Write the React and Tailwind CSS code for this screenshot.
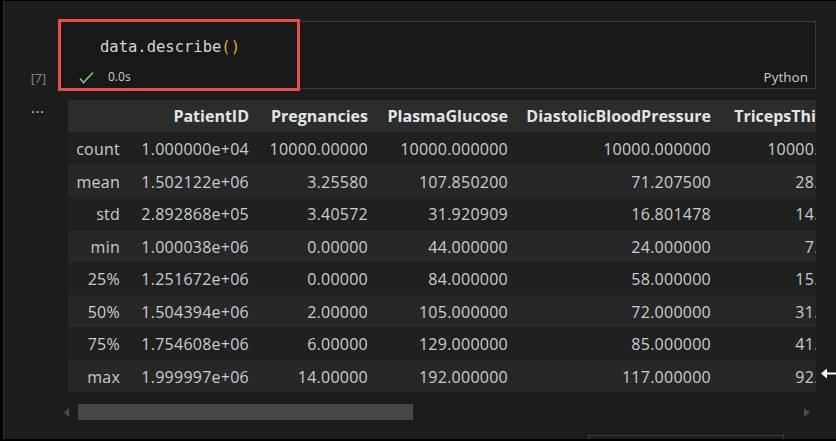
import React from "react";

const headers = ["", "PatientID", "Pregnancies", "PlasmaGlucose", "DiastolicBloodPressure", "TricepsThickness"];
const rows = [
  ["count", "1.000000e+04", "10000.00000", "10000.000000", "10000.000000", "10000.000000"],
  ["mean", "1.502122e+06", "3.25580", "107.850200", "71.207500", "28.825500"],
  ["std", "2.892868e+05", "3.40572", "31.920909", "16.801478", "14.506480"],
  ["min", "1.000038e+06", "0.00000", "44.000000", "24.000000", "7.000000"],
  ["25%", "1.251672e+06", "0.00000", "84.000000", "58.000000", "15.000000"],
  ["50%", "1.504394e+06", "2.00000", "105.000000", "72.000000", "31.000000"],
  ["75%", "1.754608e+06", "6.00000", "129.000000", "85.000000", "41.000000"],
  ["max", "1.999997e+06", "14.00000", "192.000000", "117.000000", "92.000000"],
];

const cols = "grid grid-cols-[62px_129px_119px_140px_203px_164px]";

export default function App() {
  return (
    <div className="relative w-[836px] h-[441px] overflow-hidden bg-[#1a1d1b] border-t border-black border-l-[3px] border-b-2 font-['Open_Sans',sans-serif]">
      <div className="h-full border-l border-[#2c2f2d] flex flex-col">
        {/* input cell */}
        <div className="flex mt-[20px]">
          <div className="w-[54px] flex items-end justify-end pr-[12px] pb-[4px]">
            <span className="text-[12.5px] text-[#8c8c8c] leading-none">[7]</span>
          </div>
          <div className="w-[758px] h-[68px] bg-[#181818] border border-[#393c3b] flex flex-col justify-between">
            <div className="pl-[41px] pt-[14px] font-['DejaVu_Sans_Mono',monospace] text-[15.5px] leading-[22px] text-[#d4d4d4]">
              data.describe<span className="text-[#d7b400]">()</span>
            </div>
            <div className="h-[20px] mb-[1px] flex items-center pl-[20px] pr-[7px]">
              <svg width="15" height="13" viewBox="0 0 15 13" className="mr-[14px]">
                <polyline points="1,7.5 4.5,11.5 14,1.5" fill="none" stroke="#7fc67a" strokeWidth="1.6" />
              </svg>
              <span className="text-[12px] text-[#cccccc]">0.0s</span>
              <span className="ml-auto text-[13.5px] text-[#cccccc]">Python</span>
            </div>
          </div>
        </div>

        {/* output */}
        <div className="flex mt-[11px]">
          <div className="w-[64px] flex justify-center pl-[4px]">
            <span className="text-[#cfcfcf] text-[14px] leading-none tracking-[1px] mt-[1px]">...</span>
          </div>
          <div className="w-[748px] overflow-hidden">
            <div className={`${cols} w-[817px] h-[32px] bg-[#2a2d2b] items-center text-[16px] font-bold text-[#e4e4e4] whitespace-nowrap`}>
              {headers.map((h, i) => (
                <div key={i} className={`${i === 5 ? "pr-[15px]" : "pr-[10px]"} text-right`}>{h}</div>
              ))}
            </div>
            {rows.map((r, ri) => (
              <div
                key={ri}
                className={`${cols} w-[817px] h-[32.5px] items-center text-[16px] tracking-[0.25px] text-[#cccccc] whitespace-nowrap ${ri % 2 === 1 ? "bg-[#252826]" : "bg-[#1e211f]"}`}
              >
                {r.map((c, ci) => (
                  <div key={ci} className="pr-[10px] pt-[2px] text-right">{c}</div>
                ))}
              </div>
            ))}
          </div>
        </div>

        {/* horizontal scrollbar */}
        <div className="flex items-center mt-[12px] h-[16px]">
          <div className="w-[60px]" />
          <svg width="6" height="9" viewBox="0 0 6 9">
            <polygon points="5,0 0,4.5 5,9" fill="#4a4c4b" />
          </svg>
          <div className="ml-[8px] w-[335px] h-[16px] bg-[#464646]" />
          <div className="flex-1" />
          <svg width="6" height="9" viewBox="0 0 6 9" className="mr-[26px]">
            <polygon points="0,0 6,4.5 0,9" fill="#4a4c4b" />
          </svg>
        </div>

        {/* next cell top */}
        <div className="mt-[15px] ml-[584px] w-[196px] h-[12px] border border-[#3a3d3c] shrink-0" />
      </div>

      {/* red annotation */}
      <div className="absolute left-[55px] top-[18px] w-[242px] h-[72px] border-[3px] border-[#ee4a4b]" />

      {/* white arrow cursor */}
      <svg className="absolute left-[818px] top-[367px]" width="16" height="11" viewBox="0 0 16 11">
        <line x1="3" y1="5.5" x2="15" y2="5.5" stroke="#ffffff" strokeWidth="2" />
        <polygon points="0,5.5 6,0.5 6,10.5" fill="#ffffff" />
      </svg>
    </div>
  );
}
